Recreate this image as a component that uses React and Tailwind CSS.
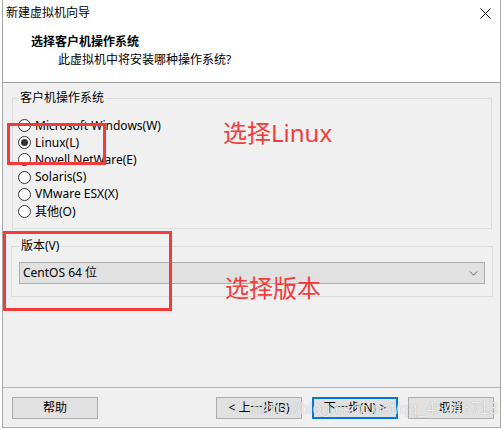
import { ChevronDown } from 'lucide-react';

const osList = [
  { label: 'Microsoft Windows(W)' },
  { label: 'Linux(L)', checked: true },
  { label: 'Novell NetWare(E)' },
  { label: 'Solaris(S)' },
  { label: 'VMware ESX(X)' },
  { label: '其他(O)' },
];

function Radio({ label, checked }) {
  return (
    <div className="flex items-center h-[17.2px] gap-[4px]">
      <span className="w-[13px] h-[13px] rounded-full border border-[#333333] bg-white flex items-center justify-center">
        {checked && <span className="w-[7px] h-[7px] rounded-full bg-[#333333]" />}
      </span>
      <span className="leading-none">{label}</span>
    </div>
  );
}

function Button({ children, focused }) {
  return (
    <button
      className={
        focused
          ? 'w-[86px] h-[22px] bg-[#e1e1e1] border-2 border-[#0078d7] flex items-center justify-center'
          : 'w-[86px] h-[22px] bg-[#e1e1e1] border border-[#adadad] flex items-center justify-center'
      }
    >
      {children}
    </button>
  );
}

export default function App() {
  return (
    <div className="relative w-[503px] h-[430px] bg-white text-[12px] text-black font-['Noto_Sans','Noto_Sans_CJK_SC',sans-serif]">
      <div className="ml-[2px] w-[499px] h-[428px] border-x border-b border-[#a8a8a8] flex flex-col">
        {/* title bar */}
        <div className="h-[26px] flex items-center justify-between pl-[3px] pr-[9px]">
          <span className="leading-none">新建虚拟机向导</span>
          <svg width="11" height="11" viewBox="0 0 11 11" className="text-black">
            <path d="M0.5 0.5 L10.5 10.5 M10.5 0.5 L0.5 10.5" stroke="currentColor" strokeWidth="1" />
          </svg>
        </div>

        {/* wizard header */}
        <div className="h-[57px] border-b border-[#a0a0a0] pl-[28px] pt-[8px]">
          <div className="font-bold leading-[16px]">选择客户机操作系统</div>
          <div className="mt-[2px] ml-[27px] leading-[16px]">此虚拟机中将安装哪种操作系统?</div>
        </div>

        {/* body */}
        <div className="flex-1 bg-[#f0f0f0] pl-[9px] pr-[8px] pt-[7px]">
          <fieldset className="border border-[#dcdcdc] pl-[5px] pb-[8px]">
            <legend className="ml-[1px] px-[1px] leading-[16px]">客户机操作系统</legend>
            <div className="pt-[11px]">
              {osList.map((os) => (
                <Radio key={os.label} label={os.label} checked={os.checked} />
              ))}
            </div>
          </fieldset>

          <fieldset className="mt-[9px] -ml-[1px] -mr-[1px] border border-[#dcdcdc] px-[7px] pb-[12px]">
            <legend className="ml-[1px] px-[1px] leading-[16px]">版本(V)</legend>
            <div className="mt-[8px] h-[22px] bg-[#e1e1e1] border border-[#adadad] flex items-center justify-between pl-[3px] pr-[4px]">
              <span className="leading-none">CentOS 64 位</span>
              <ChevronDown size={13} strokeWidth={1.5} className="text-[#444444]" />
            </div>
          </fieldset>
        </div>

        {/* button row */}
        <div className="h-[40px] border-t border-[#b4b4b4] bg-[#f0f0f0] flex items-start pt-[9px] pl-[9px] pr-[6px]">
          <Button>帮助</Button>
          <div className="flex-1" />
          <div className="flex gap-[10px]">
            <Button>&lt; 上一步(B)</Button>
            <Button focused>下一步(N) &gt;</Button>
            <Button>取消</Button>
          </div>
        </div>
      </div>

      {/* red annotations */}
      <div className="absolute left-[7px] top-[123px] w-[99px] h-[42px] border-[3px] border-[#f23c3c]" />
      <div className="absolute left-[223px] top-[121px] text-[24px] leading-[24px] text-[#f23c3c]">选择Linux</div>
      <div className="absolute left-[3px] top-[231px] w-[169px] h-[80px] border-[3px] border-[#f23c3c]" />
      <div className="absolute left-[225px] top-[276px] text-[24px] leading-[24px] text-[#f23c3c]">选择版本</div>

      {/* blog watermark */}
      <div className="absolute left-[252px] top-[401px] text-[16px] leading-[16px] font-['Liberation_Sans',sans-serif] text-white/80 [text-shadow:0_0_1px_rgba(0,0,0,0.35)]">
        https://blog.csdn.net/qq_45443713
      </div>
    </div>
  );
}
